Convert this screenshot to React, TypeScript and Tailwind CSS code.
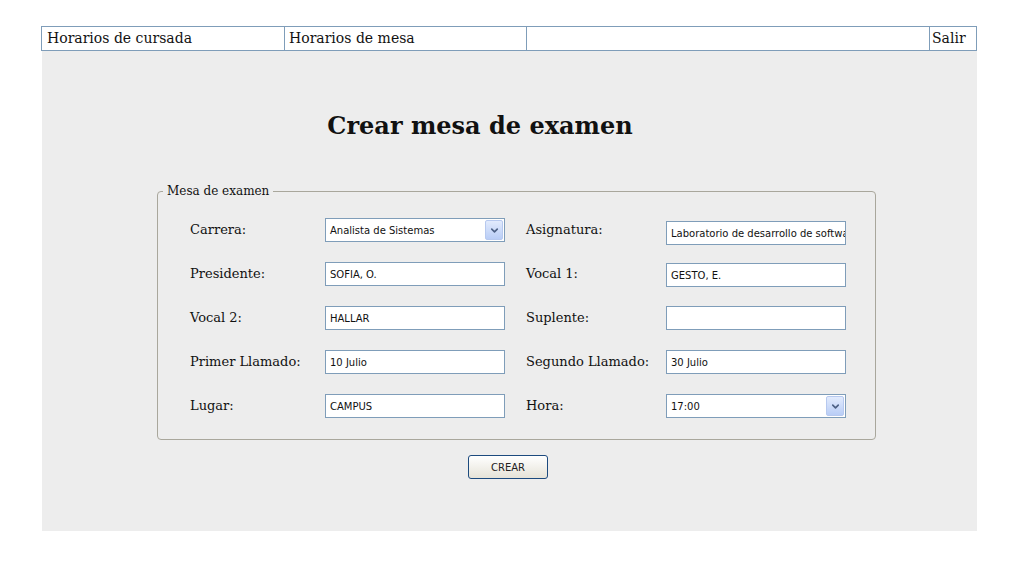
import { ChevronDown } from 'lucide-react';

const serif = { fontFamily: '"DejaVu Serif", "Liberation Serif", serif' };
const sans = { fontFamily: 'Tahoma, "DejaVu Sans", sans-serif' };

function TextBox({ value, className = '' }: { value: string; className?: string }) {
  return (
    <div
      style={sans}
      className={`h-[24px] w-[180px] bg-white border border-[#7f9db9] pl-[4px] flex items-center text-[10px] text-[#111] overflow-hidden whitespace-nowrap ${className}`}
    >
      {value}
    </div>
  );
}

function ComboBox({ value }: { value: string }) {
  return (
    <div
      style={sans}
      className="h-[24px] w-[180px] bg-white border border-[#7f9db9] pl-[4px] pr-[1px] flex items-center justify-between text-[10px] text-[#111]"
    >
      <span>{value}</span>
      <span className="w-[18px] h-[20px] rounded-[2px] border border-[#b7c9ef] bg-gradient-to-b from-[#e2ebfd] to-[#b9cdf6] flex items-center justify-center">
        <ChevronDown className="w-[11px] h-[11px] text-[#4d6185]" strokeWidth={3.5} />
      </span>
    </div>
  );
}

function Label({ text }: { text: string }) {
  return (
    <div style={serif} className="text-[13px] text-[#111] flex items-center h-[24px] whitespace-nowrap">
      {text}
    </div>
  );
}

export default function App() {
  const rows: [string, JSX.Element, string, JSX.Element][] = [
    ['Carrera:', <ComboBox value="Analista de Sistemas" />, 'Asignatura:', <TextBox value="Laboratorio de desarrollo de software" className="translate-y-[3px]" />],
    ['Presidente:', <TextBox value="SOFIA, O." />, 'Vocal 1:', <TextBox value="GESTO, E." className="translate-y-[1px]" />],
    ['Vocal 2:', <TextBox value="HALLAR" />, 'Suplente:', <TextBox value="" />],
    ['Primer Llamado:', <TextBox value="10 Julio" />, 'Segundo Llamado:', <TextBox value="30 Julio" />],
    ['Lugar:', <TextBox value="CAMPUS" />, 'Hora:', <ComboBox value="17:00" />],
  ];

  return (
    <div className="w-[1036px] h-[563px] bg-white pt-[26px] pl-[41px]">
      <div className="w-[936px]">
        {/* Menu */}
        <div style={serif} className="flex h-[25px] border border-[#7f9db9] bg-white text-[14px] text-[#111]">
          <div className="w-[243px] border-r border-[#7f9db9] pl-[5px] flex items-center">Horarios de cursada</div>
          <div className="w-[242px] border-r border-[#7f9db9] pl-[4px] flex items-center">Horarios de mesa</div>
          <div className="flex-1 border-r border-[#7f9db9]"></div>
          <div className="w-[46px] pl-[2px] flex items-center">Salir</div>
        </div>

        {/* Panel */}
        <div className="ml-[1px] h-[480px] bg-[#ededed] flex flex-col items-center">
          <h1 style={serif} className="mt-[63px] mr-[59px] text-[24px] font-bold text-[#111] leading-none">
            Crear mesa de examen
          </h1>

          <fieldset className="mt-[44px] ml-[14px] w-[719px] min-w-0 border border-[#a9a79c] rounded-[4px] pl-[5px]">
            <legend style={serif} className="px-[4px] text-[12px] text-[#111]">Mesa de examen</legend>
            <div className="grid grid-cols-[114px_180px_119px_180px] gap-x-[21px] gap-y-[20px] pl-[27px] pt-[18px] pb-[21px]">
              {rows.map(([l1, c1, l2, c2], i) => (
                <div key={i} className="contents">
                  <Label text={l1} />
                  {c1}
                  <Label text={l2} />
                  {c2}
                </div>
              ))}
            </div>
          </fieldset>

          <button
            style={sans}
            className="mt-[15px] mr-[3px] w-[80px] h-[24px] rounded-[3px] border border-[#1c4a7e] bg-gradient-to-b from-white to-[#e6e3d8] text-[10px] text-[#222]"
          >
            CREAR
          </button>
        </div>
      </div>
    </div>
  );
}
